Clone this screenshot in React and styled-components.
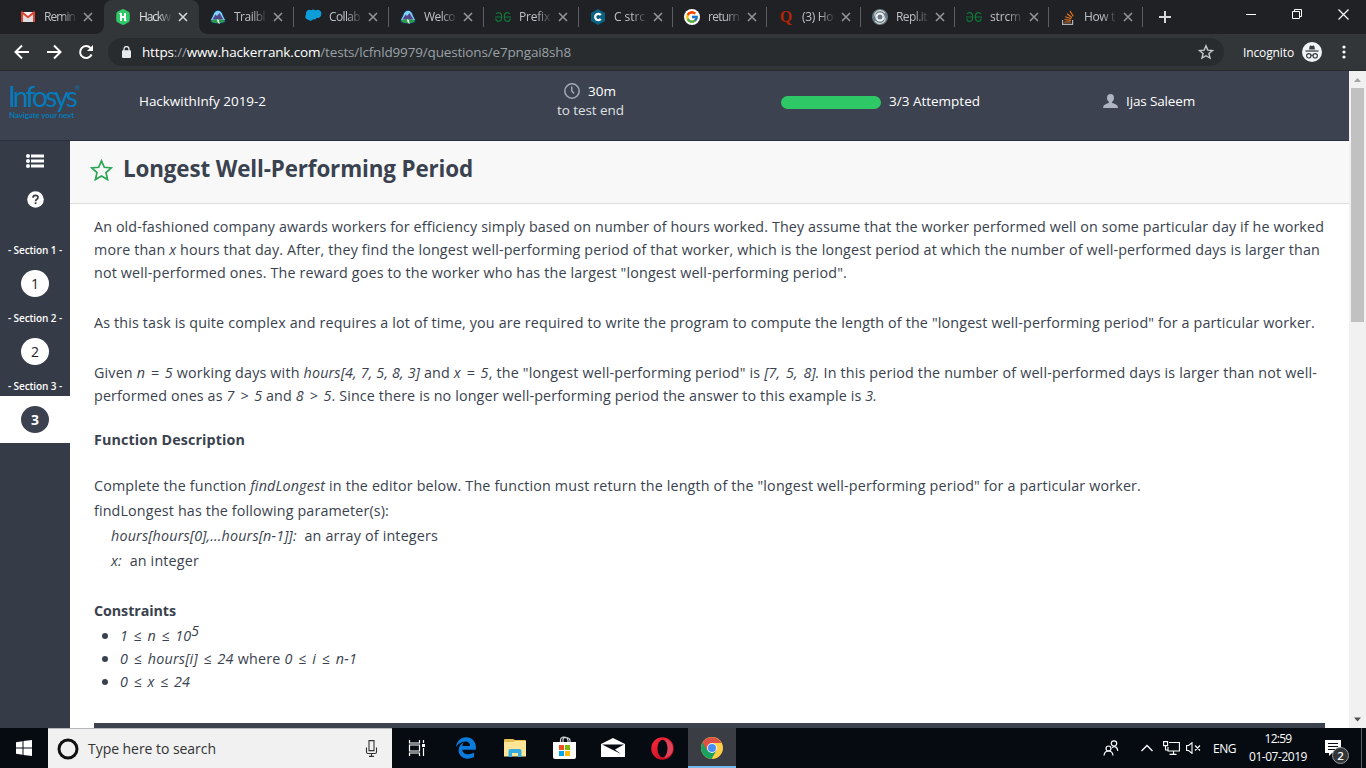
import React, { useLayoutEffect, useRef, useState } from 'react';
import styled, { createGlobalStyle, css } from 'styled-components';
import { FaEdgeLegacy } from 'react-icons/fa6';
import { FcGoogle } from 'react-icons/fc';

const GlobalStyle = createGlobalStyle`
  * { box-sizing: border-box; }
  body { margin: 0; overflow: hidden; background: #fff; }
  body, button { font-family: "Open Sans", "Noto Sans", sans-serif; }
  svg { display: block; flex: none; }
`;

/* Text whose tracking is adjusted so that it fills a known width. */
const FitSpan = styled.span`
  display: inline-block;
  white-space: nowrap;
  flex: none;
`;

function Fit({ width, children, ...rest }) {
  const ref = useRef(null);
  const [spacing, setSpacing] = useState(0);
  useLayoutEffect(() => {
    const el = ref.current;
    el.style.letterSpacing = '0px';
    const natural = el.getBoundingClientRect().width;
    setSpacing((width - natural) / el.textContent.length);
  }, [width]);
  return (
    <FitSpan ref={ref} style={{ letterSpacing: `${spacing}px` }} {...rest}>
      {children}
    </FitSpan>
  );
}

const Screen = styled.div`
  width: 1366px;
  height: 768px;
  display: flex;
  flex-direction: column;
  overflow: hidden;
`;

/* ---------- Browser chrome ---------- */

const TabStrip = styled.div`
  height: 34px;
  flex: none;
  display: flex;
  padding-left: 9px;
  background: #202124;
`;

const Tab = styled.div`
  position: relative;
  width: ${(p) => p.$width}px;
  flex: none;
  display: flex;
  align-items: center;
  padding-left: 11px;
  color: ${(p) => (p.$active ? '#dfe1e5' : '#bdc1c6')};
  ${(p) =>
    p.$active &&
    css`
      background: #323639;
      border-radius: 8px 8px 0 0;
      &::before, &::after {
        content: '';
        position: absolute;
        bottom: 0;
        width: 8px;
        height: 8px;
      }
      &::before { left: -8px; background: radial-gradient(circle at 0 0, transparent 7.5px, #323639 8px); }
      &::after { right: -8px; background: radial-gradient(circle at 100% 0, transparent 7.5px, #323639 8px); }
    `}
  ${(p) =>
    p.$divided &&
    css`
      &::after {
        content: '';
        position: absolute;
        right: 0;
        top: 7px;
        width: 1px;
        height: 20px;
        background: #5b5e62;
      }
    `}
`;

const TabIcon = styled.span`
  width: 16px;
  height: 16px;
  flex: none;
  display: flex;
  align-items: center;
  justify-content: center;
`;

const TabTitle = styled.span`
  width: 32px;
  margin-left: 8px;
  white-space: nowrap;
  font-size: 12px;
  line-height: 18px;
  mask-image: linear-gradient(to right, #000 55%, rgba(0, 0, 0, 0.1) 100%);
`;

const TabClose = styled.svg`
  margin-left: 7px;
  stroke: ${(p) => (p.$active ? '#d5d7da' : '#919498')};
`;

const NewTab = styled.div`
  width: 44px;
  display: flex;
  align-items: center;
  justify-content: center;
`;

const WindowButtons = styled.div`
  margin-left: auto;
  display: flex;
  width: 138px;
  padding-bottom: 6px;
`;

const WindowButton = styled.div`
  width: 46px;
  display: flex;
  align-items: center;
  justify-content: center;
`;

const Toolbar = styled.div`
  height: 37px;
  flex: none;
  display: flex;
  align-items: center;
  padding-left: 14px;
  background: #323639;
  border-bottom: 1px solid #28292c;
`;

const NavButton = styled.div`
  width: 32px;
  flex: none;
`;

const Omnibox = styled.div`
  width: 1116px;
  height: 28px;
  margin-left: -2px;
  border-radius: 14px;
  background: #282c2f;
  display: flex;
  align-items: center;
  padding: 0 10px 0 14px;
`;

const Url = styled.div`
  margin-left: 11px;
  flex: 1;
  font-size: 13.5px;
  line-height: 20px;
  color: #9aa0a6;
  b { font-weight: 400; color: #fff; }
`;

const Incognito = styled.div`
  display: flex;
  align-items: center;
  gap: 8px;
  margin-left: 19px;
  font-size: 12px;
  color: #fff;
`;

const MenuDots = styled.svg`
  margin-left: 20px;
`;

/* ---------- Page ---------- */

const Viewport = styled.div`
  height: 657px;
  flex: none;
  display: flex;
`;

const Page = styled.div`
  width: 1349px;
  display: flex;
  flex-direction: column;
`;

const Header = styled.header`
  height: 70px;
  flex: none;
  display: flex;
  background: #3c424f;
  border-bottom: 1px solid #2b2f3d;
  color: #fff;
  font-size: 13.5px;
  line-height: 20px;
`;

const Brand = styled.div`
  width: 139px;
  padding: 10px 0 0 8px;
  color: #067ab9;
`;

const BrandRow = styled.div`
  display: flex;
  height: 30px;
`;

const BrandName = styled.div`
  font-family: Lato, sans-serif;
  font-size: 28px;
  line-height: 30px;
`;

const BrandMark = styled.span`
  font-size: 6px;
  line-height: 14px;
`;

const Tagline = styled.div`
  padding-left: 1px;
  font-family: Lato, sans-serif;
  font-size: 8px;
  font-weight: 700;
  line-height: 9px;
`;

const TestName = styled.div`
  width: 418px;
  padding-top: 20px;
`;

const Timer = styled.div`
  width: 224px;
  padding-top: 10px;
  color: #dfe0e3;
  line-height: 19px;
`;

const TimeLeft = styled.div`
  display: flex;
  align-items: center;
  gap: 8px;
  padding-left: 7px;
  height: 20px;
  color: #fff;
`;

const Progress = styled.div`
  width: 322px;
  display: flex;
  gap: 8px;
  padding-top: 20px;
`;

const ProgressBar = styled.div`
  width: 100px;
  height: 13px;
  margin-top: 5px;
  border-radius: 7px;
  background: #2ec866;
`;

const User = styled.div`
  display: flex;
  gap: 8px;
  padding-top: 20px;
  svg { margin-top: 3px; }
`;

const Body = styled.div`
  flex: 1;
  min-height: 0;
  display: flex;
`;

const Sidebar = styled.nav`
  width: 70px;
  flex: none;
  display: flex;
  flex-direction: column;
  align-items: center;
  background: #353b47;
`;

const SideTool = styled.div`
  height: 39px;
  display: flex;
  align-items: center;
  justify-content: center;
`;

const SideTools = styled.div`
  height: 98px;
  flex: none;
`;

const Section = styled.div`
  width: 70px;
  height: 68px;
  flex: none;
  display: flex;
  flex-direction: column;
  align-items: center;
`;

const SectionLabel = styled.div`
  height: 21px;
  flex: none;
  font-size: 10px;
  font-weight: 600;
  line-height: 23px;
  color: #fff;
`;

const QuestionSlot = styled.div`
  width: 70px;
  height: 47px;
  flex: none;
  display: flex;
  align-items: center;
  justify-content: center;
  background: ${(p) => (p.$active ? '#fff' : 'transparent')};
`;

const QuestionNumber = styled.div`
  width: 28px;
  height: 27px;
  border-radius: 50%;
  text-align: center;
  font-size: 14px;
  line-height: 28px;
  font-weight: ${(p) => (p.$active ? 700 : 400)};
  color: ${(p) => (p.$active ? '#fff' : '#222')};
  background: ${(p) => (p.$active ? '#3b414e' : '#fff')};
`;

const Main = styled.main`
  flex: 1;
  display: flex;
  flex-direction: column;
  background: #fff;
`;

const TitleBar = styled.div`
  height: 63px;
  flex: none;
  display: flex;
  gap: 10px;
  padding: 13px 0 0 20px;
  background: #f8f8f8;
  border-bottom: 1px solid #ddd;
  svg { margin-top: 5px; }
`;

const Title = styled.h1`
  margin: 0;
  font-size: 22.4px;
  line-height: 30px;
  font-weight: 700;
  color: #39424e;
`;

const Article = styled.div`
  flex: 1;
  display: flex;
  flex-direction: column;
  padding: 11px 24px 0;
  font-size: 14.3px;
  line-height: 23px;
  color: #39424e;
`;

const Block = styled.div`
  margin-top: ${(p) => p.$gap || 0}px;
  padding-left: ${(p) => p.$indent || 0}px;
  font-weight: ${(p) => (p.$strong ? 700 : 400)};
`;

const Line = styled.div`
  height: 23px;
  display: flex;
`;

const Formula = styled.i`
  word-spacing: 1.8px;
`;

const Bullets = styled.ul`
  list-style: none;
  margin: 2px 0 0;
  padding: 0;
`;

const Bullet = styled.li`
  height: 23px;
  display: flex;
  &::before {
    content: '';
    width: 6px;
    height: 6px;
    margin: 9px 12px 0 8px;
    border-radius: 50%;
    background: #39424e;
    flex: none;
  }
  sup { font-size: 14px; line-height: 0; vertical-align: 5px; }
`;

const EditorEdge = styled.div`
  height: 5px;
  margin-top: auto;
  background: #3b424e;
`;

const Scrollbar = styled.div`
  width: 17px;
  display: flex;
  flex-direction: column;
  justify-content: space-between;
  align-items: center;
  background: #f1f1f1;
`;

const Thumb = styled.div`
  width: 13px;
  height: 234px;
  margin-bottom: auto;
  background: #c1c1c1;
`;

/* ---------- Taskbar ---------- */

const Taskbar = styled.div`
  height: 40px;
  flex: none;
  display: flex;
  background: #060b12;
  color: #fff;
`;

const TaskCell = styled.div`
  width: ${(p) => p.$width || 49}px;
  flex: none;
  display: flex;
  align-items: center;
  justify-content: center;
  padding-right: 1px;
  ${(p) =>
    p.$active &&
    css`
      background: #3a3e44;
      border-bottom: 2px solid #76b9ed;
      padding: 1px 0 0;
    `}
`;

const StartCell = styled(TaskCell)`
  padding: 0;
`;

const SearchBox = styled.div`
  width: 344px;
  display: flex;
  align-items: center;
  padding: 0 14px 0 9px;
  gap: 9px;
  background: #f1f1f1;
  border-top: 1px solid #b6b7bb;
  color: #333;
  font-size: 14px;
  svg:last-child { margin-left: auto; }
`;

const Tray = styled.div`
  margin-left: auto;
  width: 263px;
  display: flex;
  align-items: center;
  font-size: 12px;
`;

const TrayItem = styled.div`
  width: ${(p) => p.$width}px;
  flex: none;
`;

const Clock = styled.div`
  width: 58px;
  margin-right: 18px;
  flex: none;
  display: flex;
  flex-direction: column;
  align-items: center;
  line-height: 18px;
`;

const Notifications = styled.div`
  position: relative;
  width: 36px;
  flex: none;
  height: 40px;
  padding-top: 12px;
`;

const Badge = styled.span`
  position: absolute;
  left: 7px;
  top: 19px;
  width: 17px;
  height: 17px;
  border: 1px solid #9a9c9e;
  border-radius: 50%;
  background: #333638;
  font-size: 11.5px;
  font-weight: 600;
  line-height: 15px;
  text-align: center;
`;

const ShowDesktop = styled.div`
  height: 40px;
  border-left: 1px solid #5d6064;
`;

/* ---------- Icons ---------- */

const GmailIcon = () => (
  <svg width="14" height="12" viewBox="0 0 14 12">
    <path d="M0 1h14v10H0z" fill="#f2f2f2" />
    <path d="M2 11V4l5 4 5-4v7z" fill="#dedede" />
    <path d="M0 11V1.500Q0 0 1.300.3L7 5 12.700.3Q14 0 14 1.500V11h-2V3.500L7 7.500 2 3.500V11z" fill="#dc4437" />
  </svg>
);

const HackerRankIcon = () => (
  <svg width="16" height="16" viewBox="0 0 16 16">
    <path d="M8 0q1 0 6 3 .8.600.8 5t-.8 5q-5 3-6 3t-6-3Q1.200 12.400 1.200 8T2 3Q7 0 8 0z" fill="#2ec866" />
    <path d="M6 4v8M10 4v8M6 8h4M4.800 5.200L6 4.200M11.200 10.800L10 11.800" stroke="#fff" strokeWidth="1.900" fill="none" />
  </svg>
);

const TrailheadIcon = () => (
  <svg width="16" height="16" viewBox="0 0 16 16">
    <path d="M8 1Q12 1 13.500 6L16 12q0 3-8 3t-8-3l2.500-6Q4 1 8 1z" fill="#16325c" />
    <path d="M8 1.800q3.400 0 4.600 4.500L15 11H1l2.400-4.700Q4.600 1.800 8 1.800z" fill="#7fd3f7" />
    <path d="M2.500 10.500l3-5 1.500 1.500L9.500 4l4 6.500z" fill="#54448c" />
    <path d="M.8 11.500q7.200-2.500 14.400 0Q14.500 14.300 8 14.300T.8 11.500z" fill="#2e9b4b" />
    <path d="M7 10.800q2.500.7 1 1.700l1.500 2" stroke="#fff" strokeWidth="1.200" fill="none" />
  </svg>
);

const SalesforceIcon = () => (
  <svg width="17" height="16" viewBox="0 0 17 16">
    <path d="M1.200 5.500A3.400 3.400 0 0 1 6 1.300a3.500 3.500 0 0 1 4.500.2 3.700 3.700 0 0 1 5.700 4 3.300 3.300 0 0 1-4.400 3.200 3 3 0 0 1-3.600 1.600 3.500 3.500 0 0 1-5.400.300A3 3 0 0 1 1.200 5.500z" fill="#0d9ddb" />
  </svg>
);

const CppIcon = () => (
  <svg width="16" height="16" viewBox="0 0 16 16">
    <path d="M8 0l7 4v8l-7 4-7-4V4z" fill="#0b6080" />
    <path d="M10.800 6.200A3.100 3.100 0 1 0 10.800 9.800" stroke="#fff" strokeWidth="2.200" fill="none" />
  </svg>
);

const GeeksIcon = () => (
  <svg width="16" height="10" viewBox="0 0 16 10" fill="none" stroke="#0f7a3a" strokeWidth="1.200">
    <path d="M0 5h6.600M1 2Q2 .7 3.600.7 6.700.7 6.700 5T3.600 9.300Q.8 9.300.8 6.500" />
    <path d="M16 5H9.400M15 2Q14 .7 12.400.7 9.300.7 9.300 5t3.100 4.300q2.800 0 2.800-2.800" />
  </svg>
);

const GoogleDisc = styled.span`
  display: flex;
  padding: 1px;
  border-radius: 50%;
  background: #fff;
`;

const QuoraGlyph = styled.span`
  font: 700 16px/16px "Liberation Serif", serif;
  color: #b3240b;
`;

const ReplIcon = () => (
  <svg width="16" height="16" viewBox="0 0 16 16" fill="none">
    <circle cx="8" cy="8" r="8" fill="#667881" />
    <circle cx="8" cy="8" r="3.500" stroke="#f3f5f6" strokeWidth="2" />
    <path d="M4.500 9Q1 5 5 2.500T13 4M11.500 7q3.500 4-.5 6.500T3 12" stroke="#c8d0d3" strokeWidth="1.300" />
  </svg>
);

const StackIcon = () => (
  <svg width="12" height="15" viewBox="0 0 12 15" fill="none">
    <path d="M.6 10v4.300h10V10" stroke="#aeb2b6" strokeWidth="1.200" />
    <path d="M2.300 12h6.500M2.500 9.500l6.400.8M3.200 6.700l6.200 2M5 3.800l5 3.800M8 1l3.300 5.200" stroke="#e8771f" strokeWidth="1.200" />
  </svg>
);

const ListIcon = () => (
  <svg width="18" height="14" viewBox="0 0 18 14" fill="#fff">
    {[2, 7, 12].map((y) => (
      <g key={y}>
        <circle cx="2" cy={y} r="2" />
        <rect x="5" y={y - 1.5} width="13" height="3" />
      </g>
    ))}
  </svg>
);

const ChromeIcon = () => (
  <svg width="22" height="22" viewBox="0 0 22 22">
    <circle cx="11" cy="11" r="11" fill="#ffcd46" />
    <path d="M11 11L1.500 5.500A11 11 0 0 0 10.500 22L15.500 13.500z" fill="#1aa260" />
    <path d="M11 11L6.200 13.500 1.500 5.500A11 11 0 0 1 20.500 6H11z" fill="#de5145" />
    <circle cx="11" cy="11" r="5" fill="#f1f1f1" />
    <circle cx="11" cy="11" r="4" fill="#4a8cf6" />
  </svg>
);

const TABS = [
  { title: 'Remin', icon: <GmailIcon />, width: 95 },
  { title: 'Hackw', icon: <HackerRankIcon />, width: 95, active: true },
  { title: 'Trailbl', icon: <TrailheadIcon />, width: 95, divided: true },
  { title: 'Collab', icon: <SalesforceIcon />, width: 95, divided: true },
  { title: 'Welco', icon: <TrailheadIcon />, width: 95, divided: true },
  { title: 'Prefix', icon: <GeeksIcon />, width: 95, divided: true },
  { title: 'C strc', icon: <CppIcon />, width: 94, divided: true },
  { title: 'return', icon: <GoogleDisc><FcGoogle size={14} /></GoogleDisc>, width: 94, divided: true },
  { title: '(3) Ho', icon: <QuoraGlyph>Q</QuoraGlyph>, width: 94, divided: true },
  { title: 'Repl.it', icon: <ReplIcon />, width: 94, divided: true },
  { title: 'strcm', icon: <GeeksIcon />, width: 94, divided: true },
  { title: 'How t', icon: <StackIcon />, width: 94, divided: true },
];

function Browser() {
  return (
    <>
      <TabStrip>
        {TABS.map((t, i) => (
          <Tab key={i} $width={t.width} $active={t.active} $divided={t.divided}>
            <TabIcon>{t.icon}</TabIcon>
            <TabTitle><Fit width={31}>{t.title}</Fit></TabTitle>
            <TabClose $active={t.active} width="10" height="10" viewBox="0 0 10 10" strokeWidth="1.600">
              <path d="M1 1l8 8M9 1L1 9" />
            </TabClose>
          </Tab>
        ))}
        <NewTab>
          <svg width="12" height="12" viewBox="0 0 12 12" stroke="#d5d7da" strokeWidth="2">
            <path d="M6 0v12M0 6h12" />
          </svg>
        </NewTab>
        <WindowButtons>
          <WindowButton>
            <svg width="10" height="10" viewBox="0 0 10 10"><path d="M0 5.500h10" stroke="#fff" /></svg>
          </WindowButton>
          <WindowButton>
            <svg width="10" height="10" viewBox="0 0 10 10" fill="none" stroke="#fff">
              <path d="M.5 2.500h7v7h-7zM2.500 2.500v-2h7v7h-2" />
            </svg>
          </WindowButton>
          <WindowButton>
            <svg width="11" height="11" viewBox="0 0 11 11" stroke="#fff" strokeWidth="1.200"><path d="M.5.500l10 10M10.500.500l-10 10" /></svg>
          </WindowButton>
        </WindowButtons>
      </TabStrip>
      <Toolbar>
        <NavButton>
          <svg width="16" height="16" viewBox="0 0 16 16" fill="none" stroke="#fff" strokeWidth="2"><path d="M15 8H2M8 1.500L1.500 8 8 14.500" /></svg>
        </NavButton>
        <NavButton>
          <svg width="16" height="16" viewBox="0 0 16 16" fill="none" stroke="#fff" strokeWidth="2"><path d="M1 8h13M8 1.500L14.500 8 8 14.500" /></svg>
        </NavButton>
        <NavButton>
          <svg width="16" height="16" viewBox="0 0 16 16" fill="none" stroke="#fff" strokeWidth="2">
            <path d="M13.600 10.500A6 6 0 1 1 12.500 4" />
            <path d="M15 1v6H9z" fill="#fff" stroke="none" />
          </svg>
        </NavButton>
        <Omnibox>
          <svg width="9" height="12" viewBox="0 0 9 12">
            <path d="M2 5V3a2.500 2.500 0 0 1 5 0v2" fill="none" stroke="#e8eaed" strokeWidth="1.300" />
            <rect x="0" y="4.200" width="9" height="7.800" rx="1" fill="#e8eaed" />
          </svg>
          <Url>
            <Fit width={429}><b>https</b>://<b>www.hackerrank.com</b>/tests/lcfnld9979/questions/e7pngai8sh8</Fit>
          </Url>
          <svg width="16" height="16" viewBox="0 0 16 16" fill="none" stroke="#c6c9cc" strokeWidth="1.400">
            <path d="M8 1.800l1.800 4.300 4.700.4-3.600 3 1.100 4.600L8 11.700l-4 2.400 1.100-4.600-3.600-3 4.700-.4z" />
          </svg>
        </Omnibox>
        <Incognito>
          <Fit width={51}>Incognito</Fit>
          <svg width="20" height="20" viewBox="0 0 20 20">
            <circle cx="10" cy="10" r="10" fill="#f1f3f4" />
            <path d="M7 7.500L7.700 4q.2-.6.900-.4L10 4l1.400-.4q.7-.2.900.4L13 7.500z" fill="#3c4043" />
            <path d="M3.500 9h13" stroke="#3c4043" strokeWidth="1.300" />
            <g fill="none" stroke="#3c4043" strokeWidth="1.200">
              <circle cx="6.800" cy="13.800" r="2.200" />
              <circle cx="13.200" cy="13.800" r="2.200" />
              <path d="M9 13.500q1-.7 2 0" />
            </g>
          </svg>
        </Incognito>
        <MenuDots width="4" height="14" viewBox="0 0 4 14" fill="#fff">
          <circle cx="2" cy="2" r="1.600" /><circle cx="2" cy="7" r="1.600" /><circle cx="2" cy="12" r="1.600" />
        </MenuDots>
      </Toolbar>
    </>
  );
}

function TestHeader() {
  return (
    <Header>
      <Brand>
        <BrandRow>
          <BrandName><Fit width={67}>Infosys</Fit></BrandName>
          <BrandMark>®</BrandMark>
        </BrandRow>
        <Tagline><Fit width={65}>Navigate your next</Fit></Tagline>
      </Brand>
      <TestName><Fit width={127}>HackwithInfy 2019-2</Fit></TestName>
      <Timer>
        <TimeLeft>
          <svg width="16" height="16" viewBox="0 0 16 16" fill="none" stroke="#a3a9b8" strokeWidth="1.500">
            <circle cx="8" cy="8" r="7.200" /><path d="M7.800 3.500V8l2.200 2.500" />
          </svg>
          <Fit width={28}>30m</Fit>
        </TimeLeft>
        <Fit width={67}>to test end</Fit>
      </Timer>
      <Progress>
        <ProgressBar />
        <Fit width={91}>3/3 Attempted</Fit>
      </Progress>
      <User>
        <svg width="15" height="14" viewBox="0 0 15 14" fill="#aeb4c0">
          <path d="M7.500 0C9.800 0 11 1.600 11 4S9.800 8 7.500 8 4 6.400 4 4s1.200-4 3.500-4z" />
          <path d="M0 14q0-3 2.500-3.800L6 8.800V7h3v1.800l3.500 1.400Q15 11 15 14z" />
        </svg>
        <Fit width={69}>Ijas Saleem</Fit>
      </User>
    </Header>
  );
}

function SideNav() {
  return (
    <Sidebar>
      <SideTools>
        <SideTool><ListIcon /></SideTool>
        <SideTool>
          <svg width="17" height="17" viewBox="0 0 17 17">
            <circle cx="8.500" cy="8.500" r="8.300" fill="#fff" />
            <path d="M6 6.800Q6 4.300 8.500 4.300T11 6.400Q11 7.600 9.600 8.400 8.600 9 8.600 10.200" fill="none" stroke="#353b47" strokeWidth="1.700" />
            <rect x="7.700" y="11.300" width="1.800" height="1.800" fill="#353b47" />
          </svg>
        </SideTool>
      </SideTools>
      {[1, 2, 3].map((n) => (
        <Section key={n}>
          <SectionLabel><Fit width={54}>- Section {n} -</Fit></SectionLabel>
          <QuestionSlot $active={n === 3}>
            <QuestionNumber $active={n === 3}>{n}</QuestionNumber>
          </QuestionSlot>
        </Section>
      ))}
    </Sidebar>
  );
}

function Problem() {
  return (
    <Main>
      <TitleBar>
        <svg width="23" height="22" viewBox="0 0 23 22" fill="none" stroke="#2ba455" strokeWidth="1.700">
          <path d="M11.500 1.800l2.800 6.500 7 .6-5.300 4.700 1.600 7-6.100-3.700-6.100 3.700 1.600-7L1.700 8.900l7-.6z" />
        </svg>
        <Title><Fit width={350}>Longest Well-Performing Period</Fit></Title>
      </TitleBar>
      <Article>
        <Block>
          <Line><Fit width={1230}>An old-fashioned company awards workers for efficiency simply based on number of hours worked. They assume that the worker performed well on some particular day if he worked</Fit></Line>
          <Line><Fit width={1226}>more than <i>x</i> hours that day. After, they find the longest well-performing period of that worker, which is the longest period at which the number of well-performed days is larger than</Fit></Line>
          <Line><Fit width={753}>not well-performed ones. The reward goes to the worker who has the largest "longest well-performing period".</Fit></Line>
        </Block>
        <Block $gap={27}>
          <Line><Fit width={1221}>As this task is quite complex and requires a lot of time, you are required to write the program to compute the length of the "longest well-performing period" for a particular worker.</Fit></Line>
        </Block>
        <Block $gap={27}>
          <Line><Fit width={1223}>Given <Formula>n = 5</Formula> working days with <i>hours[4, 7, 5, 8, 3]</i> and <Formula>x = 5</Formula>, the "longest well-performing period" is <Formula>[7, 5, 8].</Formula> In this period the number of well-performed days is larger than not well-</Fit></Line>
          <Line><Fit width={783}>performed ones as <Formula>7 &gt; 5</Formula> and <Formula>8 &gt; 5</Formula>. Since there is no longer well-performing period the answer to this example is <i>3.</i></Fit></Line>
        </Block>
        <Block $gap={21} $strong>
          <Line><Fit width={151}>Function Description</Fit></Line>
        </Block>
        <Block $gap={23}>
          <Line><Fit width={1047}>Complete the function <i>findLongest</i> in the editor below. The function must return the length of the "longest well-performing period" for a particular worker.</Fit></Line>
        </Block>
        <Block $gap={2}>
          <Line><Fit width={295}>findLongest has the following parameter(s):</Fit></Line>
        </Block>
        <Block $gap={2} $indent={17}>
          <Line><Fit width={327}><i>hours[hours[0],...hours[n-1]]:</i>{'\u00a0 '}an array of integers</Fit></Line>
        </Block>
        <Block $gap={2} $indent={17}>
          <Line><Fit width={88}><i>x:</i>{'\u00a0 '}an integer</Fit></Line>
        </Block>
        <Block $gap={27} $strong>
          <Line><Fit width={82}>Constraints</Fit></Line>
        </Block>
        <Bullets>
          <Bullet><Fit width={79}><Formula>1 ≤ n ≤ 10<sup>5</sup></Formula></Fit></Bullet>
          <Bullet><Fit width={237}><Formula>0 ≤ hours[i] ≤ 24</Formula> where <Formula>0 ≤ i ≤ n-1</Formula></Fit></Bullet>
          <Bullet><Fit width={70}><Formula>0 ≤ x ≤ 24</Formula></Fit></Bullet>
        </Bullets>
        <EditorEdge />
      </Article>
    </Main>
  );
}

function SystemBar() {
  return (
    <Taskbar>
      <StartCell $width={48}>
        <svg width="16" height="16" viewBox="0 0 16 16" fill="#fff">
          <path d="M0 2.200L6.500 1.300v6.200H0zM7.500 1.100L16 0v7.500H7.500zM0 8.500h6.500v6.200L0 13.800zM7.500 8.500H16V16l-8.500-1.100z" />
        </svg>
      </StartCell>
      <SearchBox>
        <svg width="22" height="22" viewBox="0 0 22 22" fill="none"><circle cx="11" cy="11" r="9" stroke="#111" strokeWidth="3" /></svg>
        <Fit width={128}>Type here to search</Fit>
        <svg width="13" height="17" viewBox="0 0 13 17" fill="none" stroke="#333" strokeWidth="1.100">
          <path d="M4 .6h5v10H4zM1.500 7.500V12q0 1.500 1.500 1.500h7q1.500 0 1.500-1.500V7.500M6.500 13.500v3M4 16.400h5" />
        </svg>
      </SearchBox>
      <TaskCell $width={50}>
        <svg width="18" height="16" viewBox="0 0 18 16" fill="none" stroke="#fff" strokeWidth="1.200">
          <path d="M1.500 0v3h10V0M1.500 16v-3h10v3M1.500 5h10v6h-10zM15.500 0v3M15.500 8v8" />
          <rect x="14" y="4" width="3" height="3" fill="#fff" stroke="none" />
        </svg>
      </TaskCell>
      <TaskCell><FaEdgeLegacy size={22} color="#0b7bdc" /></TaskCell>
      <TaskCell>
        <svg width="22" height="18" viewBox="0 0 22 18">
          <path d="M0 1q0-1 1-1h8l2 1h10q1 0 1 1v15H0z" fill="#e5bd50" />
          <path d="M0 3h9l2-1h11v15.500H0z" fill="#fce597" />
          <path d="M4.500 18v-6q0-2 2-2h9q2 0 2 2v6H14v-4H8v4z" fill="#36ade2" />
        </svg>
      </TaskCell>
      <TaskCell>
        <svg width="23" height="24" viewBox="0 0 23 24">
          <path d="M7.500 7V4.500Q7.500 1 11 1t4 3.500V7M10 7V3.500Q10 1.500 13 1.500T17 4v3" fill="none" stroke="#d5d5d5" strokeWidth="1.200" />
          <path d="M0 6h23v15q0 2-2 2H2q-2 0-2-2z" fill="#fff" />
          <path d="M6 9h5v5H6z" fill="#f25022" /><path d="M12 9h5v5h-5z" fill="#7fba00" />
          <path d="M6 15h5v5H6z" fill="#00a4ef" /><path d="M12 15h5v5h-5z" fill="#ffb900" />
        </svg>
      </TaskCell>
      <TaskCell>
        <svg width="24" height="20" viewBox="0 0 24 20">
          <path d="M0 6L12 0l12 6v13H0z" fill="#fff" />
          <path d="M1 6.500h22l-9 5 6 4.500z" fill="#060b12" />
        </svg>
      </TaskCell>
      <TaskCell $width={50}>
        <svg width="23" height="23" viewBox="0 0 23 23">
          <defs>
            <linearGradient id="opera" x1="0" y1="0" x2="1" y2="1">
              <stop offset="0" stopColor="#ff2b3d" /><stop offset="1" stopColor="#b5061b" />
            </linearGradient>
          </defs>
          <circle cx="11.500" cy="11.500" r="11.200" fill="url(#opera)" />
          <path d="M13 2c6 1 9 5 9 9.500S19 20 13 21c4-3 4-16 0-19z" fill="#e0445a" />
          <ellipse cx="11.500" cy="11.500" rx="5" ry="8.700" fill="#060b12" />
        </svg>
      </TaskCell>
      <TaskCell $width={48} $active><ChromeIcon /></TaskCell>
      <Tray>
        <TrayItem $width={38}>
          <svg width="16" height="16" viewBox="0 0 16 16" fill="none" stroke="#fff" strokeWidth="1.200">
            <circle cx="5.500" cy="8.500" r="2.500" /><circle cx="11" cy="3.500" r="2.700" />
            <path d="M1 15.500q.5-4.500 4.500-4.500t4.500 4.500M9 7.500q5-2.500 5.800 3.500" />
          </svg>
        </TrayItem>
        <TrayItem $width={22}>
          <svg width="12" height="8" viewBox="0 0 12 8" fill="none" stroke="#fff" strokeWidth="1.300"><path d="M.5 7L6 1.500 11.500 7" /></svg>
        </TrayItem>
        <TrayItem $width={23}>
          <svg width="17" height="14" viewBox="0 0 17 14" fill="none" stroke="#fff" strokeWidth="1.100">
            <path d="M6 1.500h10.400v8.500H5V6M10.500 10v3M6.500 13.400h7M2.500 5v4h2.500M.6.600h4v4h-4z" />
          </svg>
        </TrayItem>
        <TrayItem $width={27}>
          <svg width="16" height="12" viewBox="0 0 16 12" fill="none" stroke="#fff" strokeWidth="1.100">
            <path d="M.6 3.500h2L6 .8v10.500L2.600 8.500h-2zM9 3.500l5 5M14 3.500l-5 5" />
          </svg>
        </TrayItem>
        <TrayItem $width={36}><Fit width={23}>ENG</Fit></TrayItem>
        <Clock>
          <Fit width={27}>12:59</Fit>
          <Fit width={58}>01-07-2019</Fit>
        </Clock>
        <Notifications>
          <svg width="16" height="16" viewBox="0 0 16 16">
            <path d="M0 0h16v13H7l-3 3v-3H0z" fill="#fff" />
            <path d="M3 3.500h10M3 6.500h10M3 9.500h7" stroke="#060b12" />
          </svg>
          <Badge>2</Badge>
        </Notifications>
        <ShowDesktop />
      </Tray>
    </Taskbar>
  );
}

export default function App() {
  return (
    <Screen>
      <GlobalStyle />
      <Browser />
      <Viewport>
        <Page>
          <TestHeader />
          <Body>
            <SideNav />
            <Problem />
          </Body>
        </Page>
        <Scrollbar>
          <svg width="17" height="17" viewBox="0 0 17 17"><path d="M5 11l3.500-4L12 11z" fill="#a3a3a3" /></svg>
          <Thumb />
          <svg width="17" height="17" viewBox="0 0 17 17"><path d="M5 6.500l3.500 4 3.500-4z" fill="#505050" /></svg>
        </Scrollbar>
      </Viewport>
      <SystemBar />
    </Screen>
  );
}
